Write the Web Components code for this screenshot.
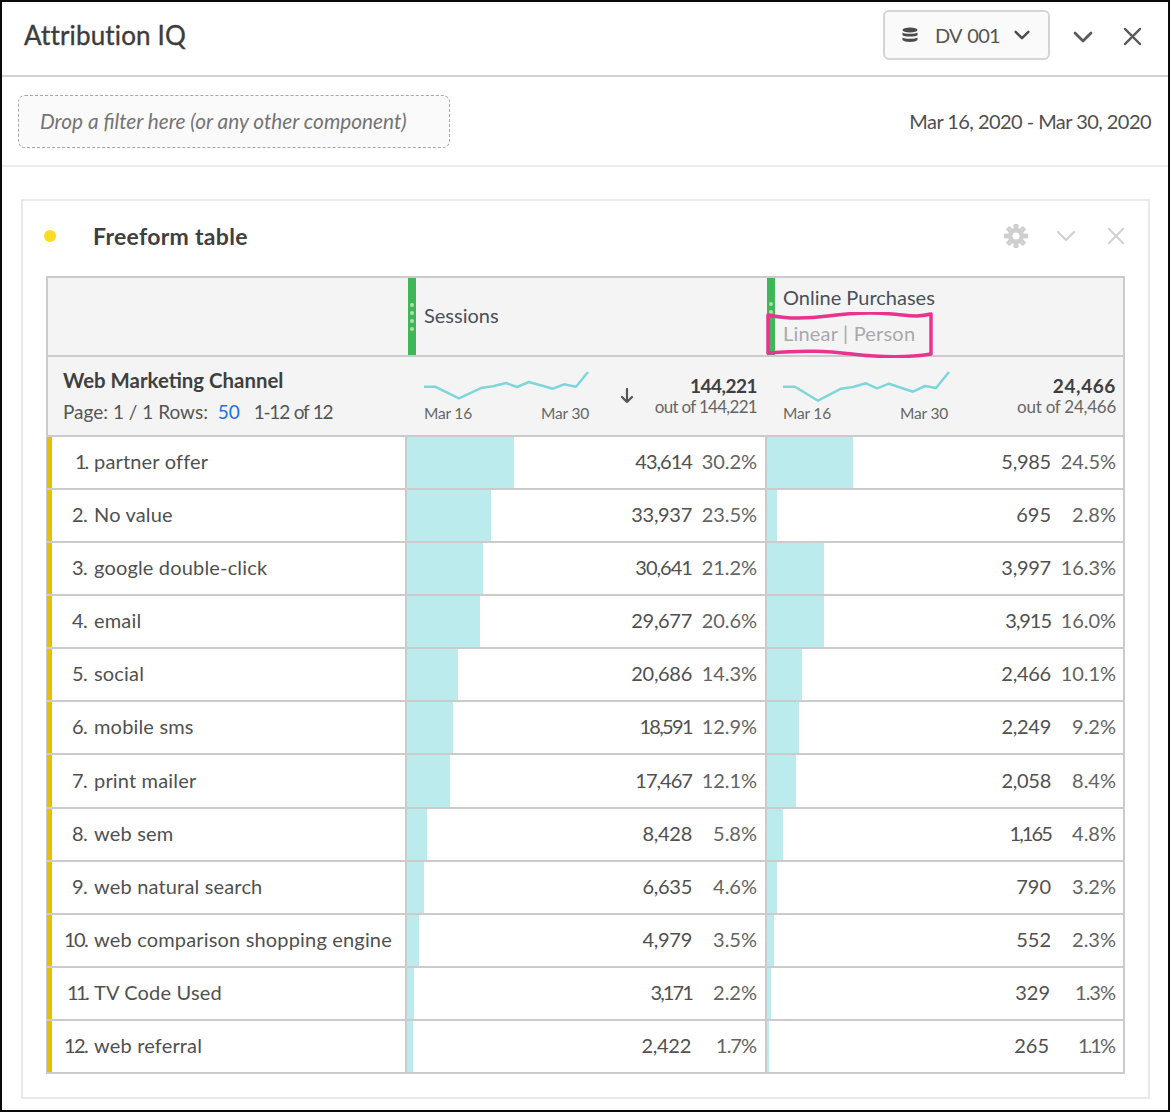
<!DOCTYPE html>
<html lang="en">

<head>
    <meta charset="UTF-8">
    <title>Attribution IQ</title>
    <style>
        html, body {
            margin: 0;
            background: #fff;
        }
        body {
            font-family: "Lato", "Liberation Sans", sans-serif;
            color: #4b4b4b;
            width: 1171px;
            height: 1113px;
            overflow: hidden;
        }
    </style>
</head>

<body>
    <aiq-window>
        <aiq-panel>
            <aiq-table></aiq-table>
        </aiq-panel>
    </aiq-window>

    <script>
        const chevron = (size, color, sw) => `<svg width="${size}" height="${size}" viewBox="0 0 20 20" style="display:block"><path d="M2 6 L10 14 L18 6" fill="none" stroke="${color}" stroke-width="${sw}" stroke-linecap="round" stroke-linejoin="round"/></svg>`;
        const cross = (size, color, sw) => `<svg width="${size}" height="${size}" viewBox="0 0 20 20" style="display:block"><path d="M2 2 L18 18 M18 2 L2 18" fill="none" stroke="${color}" stroke-width="${sw}" stroke-linecap="round"/></svg>`;

        // Lato digits are all one width, the "1" in the reference is much narrower
        const ones = (s) => s.split("1").length - 1;
        const numSpacing = (s) => {
            const slack = s.length > 4 ? (s.length > 5 ? 2 : 1.4) : 0;
            return -(slack + ones(s) * 4) / s.length;
        };
        const pctSpacing = (s) => (s.length > 4 ? -.1 : -(ones(s) * 4) / s.length);

        class AiqWindow extends HTMLElement {
            constructor() {
                super();
                this.attachShadow({ mode: "open" });
                this.shadowRoot.innerHTML = `
                    <style>
                        :host {
                            display: block;
                            box-sizing: border-box;
                            width: 1170px;
                            height: 1112px;
                            border: 2px solid #0a0a0a;
                        }
                        .top {
                            height: 75px;
                            box-sizing: border-box;
                            border-bottom: 2px solid #d2d2d2;
                            display: flex;
                            align-items: center;
                            padding: 0 26px 8px 22px;
                        }
                        h1 {
                            margin: 0;
                            font-size: 26px;
                            font-weight: 400;
                            letter-spacing: .15px;
                            -webkit-text-stroke: .35px #3c3c3c;
                            color: #3c3c3c;
                            flex: 1;
                        }
                        .ds {
                            width: 167px;
                            height: 50px;
                            box-sizing: border-box;
                            border: 2px solid #d4d4d4;
                            border-radius: 6px;
                            background: #fafafa;
                            display: flex;
                            align-items: center;
                            padding-left: 17px;
                            font-size: 20px;
                            color: #555;
                            margin-top: 1px;
                        }
                        .ds span {
                            margin: 0 14px 0 17px;
                            letter-spacing: -.8px;
                            word-spacing: 2px;
                        }
                        .tools {
                            display: flex;
                            align-items: center;
                            gap: 30px;
                            margin: 4px 0 0 23px;
                        }
                        .filters {
                            height: 90px;
                            box-sizing: border-box;
                            border-bottom: 2px solid #ececec;
                            display: flex;
                            align-items: center;
                            justify-content: space-between;
                            padding: 0 17px 0 16px;
                        }
                        .drop {
                            width: 432px;
                            height: 53px;
                            margin-top: 1px;
                            box-sizing: border-box;
                            border: 1.5px dashed #a8a8a8;
                            border-radius: 7px;
                            background: #fafafa;
                            display: flex;
                            align-items: center;
                            padding: 0 0 2px 21px;
                            font-style: italic;
                            font-size: 20.8px;
                            color: #747474;
                        }
                        .date {
                            font-size: 20px;
                            letter-spacing: -.55px;
                            color: #4f4f4f;
                            padding-bottom: 1px;
                        }
                    </style>
                    <div class="top">
                        <h1>Attribution IQ</h1>
                        <div class="ds">
                            <svg width="16" height="16" viewBox="0 0 16 16"><g fill="#4b4b4b"><ellipse cx="8" cy="3" rx="7.5" ry="2.6"/><path d="M.5 5.4C2 7.2 14 7.2 15.500 5.400V8.200C14 10 2 10 .5 8.200Z"/><path d="M.5 10.500C2 12.300 14 12.300 15.500 10.500V13C14 15.600 2 15.600 .5 13Z"/></g></svg>
                            <span>DV 001</span>
                            ${chevron(16, "#4b4b4b", 3)}
                        </div>
                        <div class="tools">
                            ${chevron(20, "#5a5a5a", 2.8)}
                            ${cross(19, "#5a5a5a", 2.4)}
                        </div>
                    </div>
                    <div class="filters">
                        <div class="drop">Drop a filter here (or any other component)</div>
                        <div class="date">Mar 16, 2020 - Mar 30, 2020</div>
                    </div>
                    <slot></slot>
                `;
            }
        }
        customElements.define("aiq-window", AiqWindow);

        class AiqPanel extends HTMLElement {
            constructor() {
                super();
                this.attachShadow({ mode: "open" });
                this.shadowRoot.innerHTML = `
                    <style>
                        :host {
                            display: block;
                            box-sizing: border-box;
                            margin: 32px 18px 0 19px;
                            height: 900px;
                            border: 2px solid #e9e9e9;
                            padding: 0 23px;
                        }
                        .head {
                            height: 75px;
                            box-sizing: border-box;
                            padding-bottom: 5px;
                            display: flex;
                            align-items: center;
                        }
                        .dot {
                            width: 12px;
                            height: 12px;
                            border-radius: 50%;
                            background: #fcdc21;
                            margin-left: -2px;
                        }
                        h2 {
                            margin: 0 0 0 37px;
                            font-size: 23px;
                            letter-spacing: .3px;
                            font-weight: 700;
                            color: #3f3f3f;
                            flex: 1;
                        }
                        .tools {
                            display: flex;
                            align-items: center;
                            gap: 28px;
                        }
                    </style>
                    <div class="head">
                        <span class="dot"></span>
                        <h2>Freeform table</h2>
                        <div class="tools">
                            <svg width="24" height="24" viewBox="0 0 24 24" style="display:block"><g fill="#cfcfcf"><path fill-rule="evenodd" d="M12 4a8 8 0 1 0 0 16a8 8 0 1 0 0-16Zm0 4.500a3.500 3.500 0 1 1 0 7a3.500 3.500 0 1 1 0-7Z"/><rect x="9.500" y="0" width="5" height="6" rx="1"/><rect x="9.500" y="18" width="5" height="6" rx="1"/><rect x="0" y="9.500" width="6" height="5" rx="1"/><rect x="18" y="9.500" width="6" height="5" rx="1"/><rect x="9.500" y="0" width="5" height="6" rx="1" transform="rotate(45 12 12)"/><rect x="9.500" y="0" width="5" height="6" rx="1" transform="rotate(135 12 12)"/><rect x="9.500" y="0" width="5" height="6" rx="1" transform="rotate(225 12 12)"/><rect x="9.500" y="0" width="5" height="6" rx="1" transform="rotate(315 12 12)"/></g></svg>
                            <span style="margin-right:3px">${chevron(20, "#d0d0d0", 2.2)}</span>
                            ${cross(18, "#d0d0d0", 2.2)}
                        </div>
                    </div>
                    <slot></slot>
                `;
            }
        }
        customElements.define("aiq-panel", AiqPanel);

        class AiqSpark extends HTMLElement {
            constructor() {
                super();
                this.attachShadow({ mode: "open" });
                const pts = this.getAttribute("points");
                this.shadowRoot.innerHTML = `
                    <style>
                        :host { display: block; width: 165px; }
                        svg { display: block; }
                        .labels {
                            display: flex;
                            justify-content: space-between;
                            font-size: 15.5px;
                            line-height: 18px;
                            letter-spacing: -.2px;
                            color: #666;
                            margin-top: 1px;
                        }
                    </style>
                    <svg width="167" height="32" viewBox="0 0 167 32"><polyline points="${pts}" fill="none" stroke="#7fd6da" stroke-width="2.500" stroke-linejoin="round"/></svg>
                    <div class="labels"><span>Mar 16</span><span>Mar 30</span></div>
                `;
            }
        }
        customElements.define("aiq-spark", AiqSpark);

        class AiqColHead extends HTMLElement {
            constructor() {
                super();
                this.attachShadow({ mode: "open" });
                const sub = this.getAttribute("sub");
                const dots = sub ? 2 : 4;
                this.shadowRoot.innerHTML = `
                    <style>
                        :host {
                            display: flex;
                            position: relative;
                            box-sizing: border-box;
                            height: 100%;
                            border-left: 2px solid transparent;
                        }
                        .grip {
                            width: 8px;
                            background: #40b756;
                            display: flex;
                            flex-direction: column;
                            align-items: center;
                            justify-content: center;
                            gap: 4px;
                            margin: 0 8px 0 1px;
                        }
                        :host([sub]) .grip {
                            margin: 0 8px 0 0;
                            justify-content: flex-start;
                            padding-top: 24px;
                        }
                        .grip i {
                            width: 4px;
                            height: 4px;
                            border-radius: 50%;
                            background: #a8dfb3;
                        }
                        .txt {
                            display: flex;
                            flex-direction: column;
                            justify-content: center;
                            padding-bottom: 4px;
                            font-size: 20px;
                            color: #4a4f5a;
                        }
                        .txt .sub {
                            color: #a9a9ad;
                            margin-top: 12px;
                            letter-spacing: .2px;
                        }
                        svg {
                            position: absolute;
                            left: -1px;
                            top: 34px;
                        }
                    </style>
                    <div class="grip">${"<i></i>".repeat(dots)}</div>
                    <div class="txt">
                        <span><slot></slot></span>
                        ${sub ? `<span class="sub">${sub}</span>` : ""}
                    </div>
                    ${sub ? `<svg width="170" height="46" viewBox="0 0 170 46"><path d="M2 3 C20 7 40 7 62 4 S104 0 126 2 S152 5 165 2 L165 42 C140 46 112 45 86 42 S40 38 2 41 Z" fill="none" stroke="#e8348f" stroke-width="3.500" stroke-linejoin="round"/></svg>` : ""}
                `;
            }
        }
        customElements.define("aiq-col-head", AiqColHead);

        class AiqSummary extends HTMLElement {
            constructor() {
                super();
                this.attachShadow({ mode: "open" });
                const total = this.getAttribute("total");
                const sorted = this.hasAttribute("sorted");
                this.shadowRoot.innerHTML = `
                    <style>
                        :host {
                            display: flex;
                            align-items: center;
                            box-sizing: border-box;
                            height: 100%;
                            border-left: 2px solid transparent;
                            padding: 0 7px 0 16px;
                            --b-ls: .6px;
                            --s-ls: -.25px;
                        }
                        :host([sorted]) {
                            padding: 0 8px 0 17px;
                            --b-ls: -.5px;
                            --s-ls: -.7px;
                        }
                        .arrow { margin: 0 0 0 31px; }
                        .tot {
                            margin-left: auto;
                            text-align: right;
                            padding-bottom: 2px;
                        }
                        .tot b {
                            display: block;
                            font-size: 19px;
                            line-height: 23px;
                            letter-spacing: var(--b-ls);
                            color: #3f3f3f;
                        }
                        .tot span {
                            display: block;
                            font-size: 17px;
                            line-height: 20px;
                            letter-spacing: var(--s-ls);
                            color: #666;
                        }
                    </style>
                    <slot></slot>
                    ${sorted ? `<svg class="arrow" width="14" height="16" viewBox="0 0 14 16"><path d="M7 1 V14 M2 9 L7 14 L12 9" fill="none" stroke="#555" stroke-width="2.200" stroke-linecap="round" stroke-linejoin="round"/></svg>` : ""}
                    <div class="tot"><b>${total}</b><span>out of ${total}</span></div>
                `;
            }
        }
        customElements.define("aiq-summary", AiqSummary);

        class AiqValue extends HTMLElement {
            constructor() {
                super();
                this.attachShadow({ mode: "open" });
                const num = this.getAttribute("num");
                const pct = this.getAttribute("pct");
                const pctLs = pctSpacing(pct);
                this.shadowRoot.innerHTML = `
                    <style>
                        :host {
                            display: flex;
                            align-items: center;
                            justify-content: flex-end;
                            box-sizing: border-box;
                            border-left: 2px solid #cbcbcb;
                            padding: 0 8px 3px 0;
                            font-size: 20px;
                            color: #505050;
                            background: linear-gradient(#bcebee, #bcebee) no-repeat;
                            background-origin: padding-box;
                            background-size: ${this.getAttribute("bar")}px 100%;
                        }
                        :host(.last) { padding-right: 7px; }
                        .pct {
                            width: 65px;
                            text-align: right;
                            color: #636363;
                        }
                    </style>
                    <span style="letter-spacing:${numSpacing(num).toFixed(2)}px">${num}</span>
                    <span class="pct" style="letter-spacing:${pctLs.toFixed(2)}px;margin-right:${(-pctLs).toFixed(2)}px">${pct}</span>
                `;
            }
        }
        customElements.define("aiq-value", AiqValue);

        class AiqRow extends HTMLElement {
            constructor() {
                super();
                this.attachShadow({ mode: "open" });
                const d = JSON.parse(this.getAttribute("data"));
                const rank = d.rank + ".";
                this.shadowRoot.innerHTML = `
                    <style>
                        :host {
                            display: grid;
                            grid-template-columns: 357px 360px 358px;
                            flex: 1;
                            box-sizing: border-box;
                            border-bottom: 2px solid #cbcbcb;
                            min-height: 0;
                        }
                        :host(:last-child) { border-bottom: 0; }
                        .name {
                            display: flex;
                            align-items: center;
                            box-sizing: border-box;
                            margin-left: -1px;
                            padding-bottom: 3px;
                            border-left: 5px solid #e5bf00;
                            font-size: 20px;
                            letter-spacing: .17px;
                            color: #505050;
                            white-space: nowrap;
                        }
                        .rank {
                            width: 35px;
                            text-align: right;
                            margin-right: 7px;
                        }
                    </style>
                    <div class="name"><span class="rank" style="letter-spacing:${(-.6 - ones(rank) * 3 / rank.length).toFixed(2)}px">${rank}</span><span>${d.name}</span></div>
                    <aiq-value bar="${d.a[2]}" num="${d.a[0]}" pct="${d.a[1]}"></aiq-value>
                    <aiq-value class="last" bar="${d.b[2]}" num="${d.b[0]}" pct="${d.b[1]}"></aiq-value>
                `;
            }
        }
        customElements.define("aiq-row", AiqRow);

        const rows = [
            ["partner offer", ["43,614", "30.2%", 107], ["5,985", "24.5%", 86]],
            ["No value", ["33,937", "23.5%", 84], ["695", "2.8%", 10]],
            ["google double-click", ["30,641", "21.2%", 76], ["3,997", "16.3%", 57]],
            ["email", ["29,677", "20.6%", 73], ["3,915", "16.0%", 57]],
            ["social", ["20,686", "14.3%", 51], ["2,466", "10.1%", 35]],
            ["mobile sms", ["18,591", "12.9%", 46], ["2,249", "9.2%", 32]],
            ["print mailer", ["17,467", "12.1%", 43], ["2,058", "8.4%", 29]],
            ["web sem", ["8,428", "5.8%", 20], ["1,165", "4.8%", 16]],
            ["web natural search", ["6,635", "4.6%", 17], ["790", "3.2%", 10]],
            ["web comparison shopping engine", ["4,979", "3.5%", 12], ["552", "2.3%", 7]],
            ["TV Code Used", ["3,171", "2.2%", 7], ["329", "1.3%", 4]],
            ["web referral", ["2,422", "1.7%", 6], ["265", "1.1%", 2]],
        ];

        class AiqTable extends HTMLElement {
            constructor() {
                super();
                this.attachShadow({ mode: "open" });
                const body = rows.map((r, i) => {
                    const data = JSON.stringify({ rank: i + 1, name: r[0], a: r[1], b: r[2] }).replace(/"/g, "&quot;");
                    return `<aiq-row data="${data}"></aiq-row>`;
                }).join("");
                this.shadowRoot.innerHTML = `
                    <style>
                        :host {
                            display: flex;
                            flex-direction: column;
                            box-sizing: border-box;
                            height: 798px;
                            border: 2px solid #cbcbcb;
                        }
                        .band {
                            display: grid;
                            grid-template-columns: 357px 360px 358px;
                            height: 80px;
                            box-sizing: border-box;
                            background: #f4f4f4;
                            border-bottom: 2px solid #cbcbcb;
                            flex: none;
                        }
                        .band.first { height: 79px; }
                        .dim {
                            display: flex;
                            flex-direction: column;
                            justify-content: center;
                            padding-left: 15px;
                        }
                        .dim b {
                            font-size: 20.4px;
                            line-height: 25px;
                            color: #3f3f3f;
                        }
                        .dim span {
                            font-size: 19px;
                            line-height: 26px;
                            margin-top: 6px;
                            color: #555;
                        }
                        .dim em {
                            font-style: normal;
                            color: #1473e6;
                            margin: 0 9px 0 5px;
                        }
                        .dim i {
                            font-style: normal;
                            letter-spacing: -1.2px;
                            word-spacing: 1px;
                        }
                        .body {
                            flex: 1;
                            display: flex;
                            flex-direction: column;
                            min-height: 0;
                        }
                    </style>
                    <div class="band first">
                        <div></div>
                        <aiq-col-head>Sessions</aiq-col-head>
                        <aiq-col-head sub="Linear | Person">Online Purchases</aiq-col-head>
                    </div>
                    <div class="band">
                        <div class="dim">
                            <b>Web Marketing Channel</b>
                            <span>Page: 1 / 1 Rows: <em>50</em> <i>1-12 of 12</i></span>
                        </div>
                        <aiq-summary total="144,221" sorted>
                            <aiq-spark points="0,15.700 11,15.700 35,27.300 58,16.700 69,15.300 82,12 93,16 105,11 129,17.700 140,13.300 152,15.700 164,1"></aiq-spark>
                        </aiq-summary>
                        <aiq-summary total="24,466">
                            <aiq-spark points="0,15.700 12,15.700 35,29.700 58,17.700 70,16 83,12.300 94,17.300 106,12.700 130,20.700 142,15 153,17 166,1"></aiq-spark>
                        </aiq-summary>
                    </div>
                    <div class="body">${body}</div>
                `;
            }
        }
        customElements.define("aiq-table", AiqTable);
    </script>
</body>

</html>
